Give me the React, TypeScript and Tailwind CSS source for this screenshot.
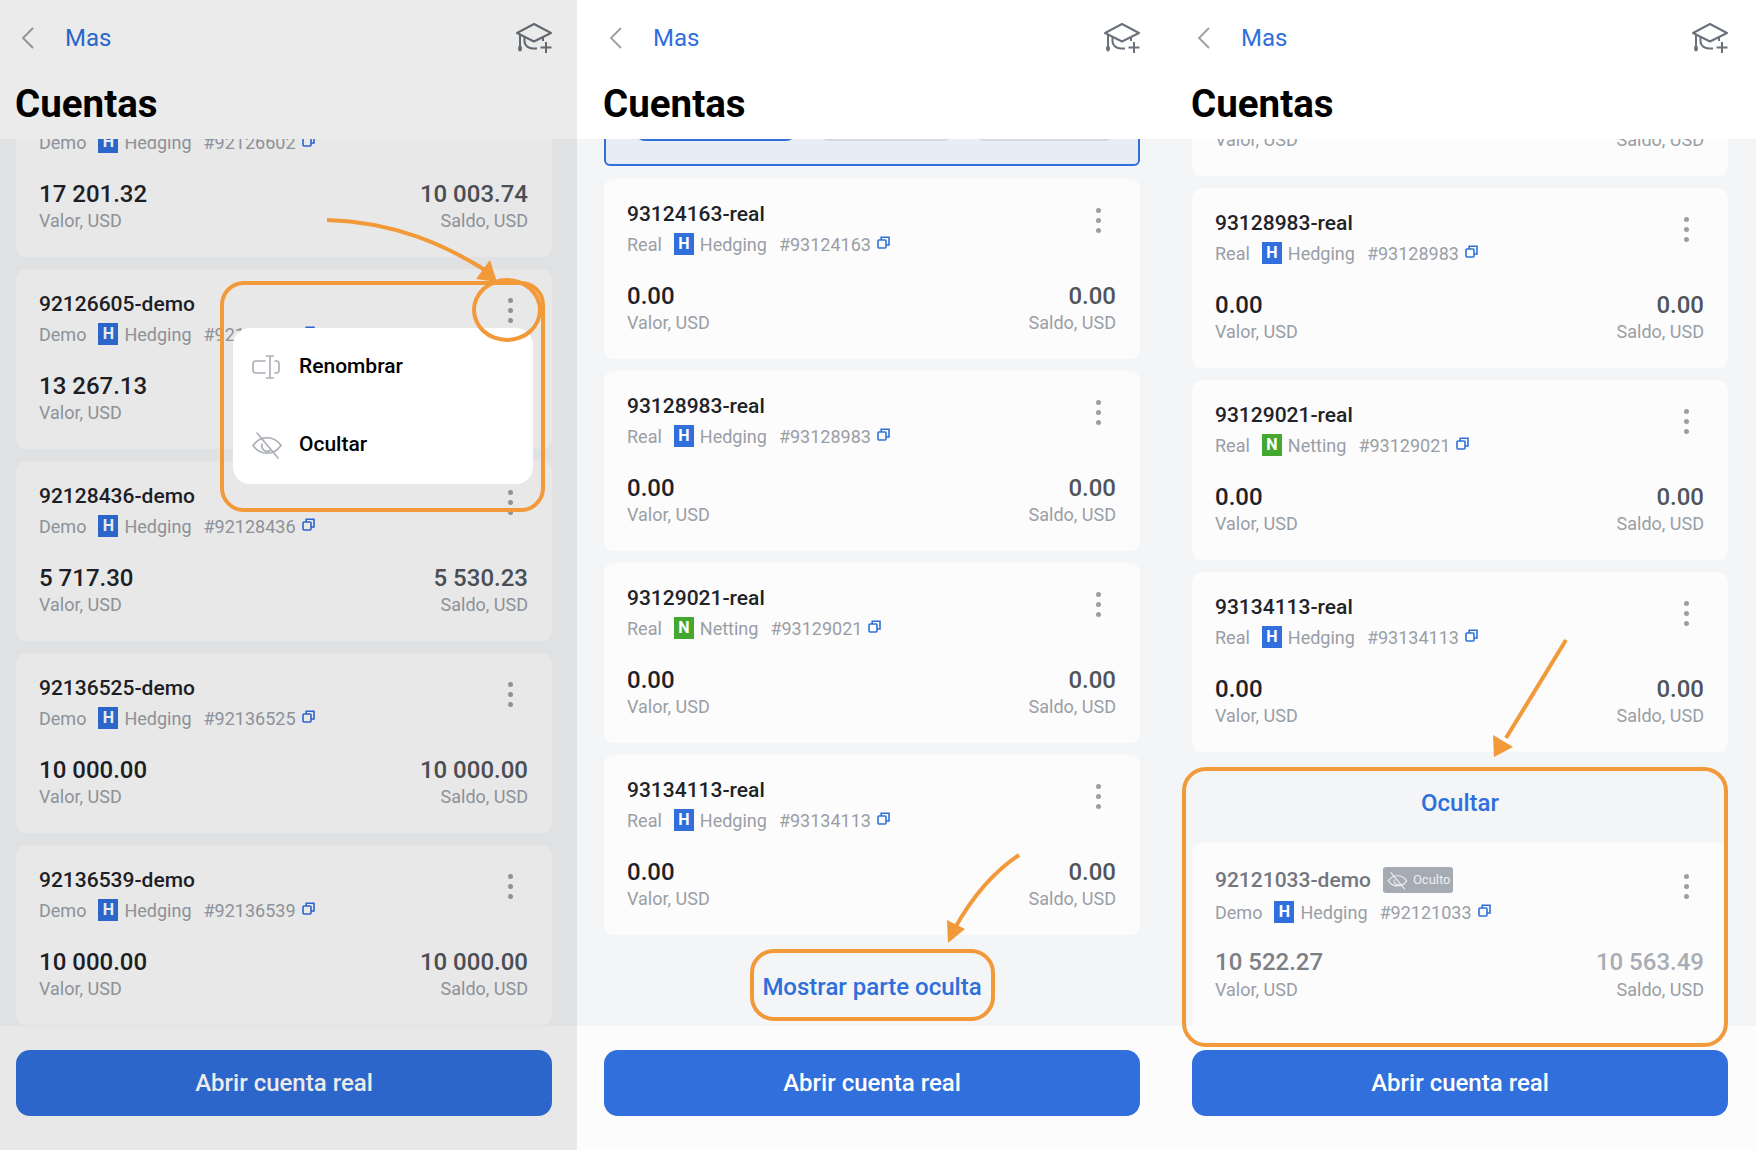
import React from "react";

const font = { fontFamily: '"Roboto", "Liberation Sans", sans-serif' };

function Copy() {
  return (
    <svg width="13" height="13" viewBox="0 0 13 13" fill="none" stroke="#2f6fdc" strokeWidth="1.6" className="ml-[6px] -mt-[3px]">
      <rect x="1" y="4" width="8" height="8" rx="1" />
      <path d="M4.2 4V1.2H12V9H9" />
    </svg>
  );
}

function Dots() {
  return (
    <div className="flex flex-col gap-[5px] mt-[7px] mr-[15px]">
      <span className="w-[5px] h-[5px] rounded-full bg-[#9a9ea6]" />
      <span className="w-[5px] h-[5px] rounded-full bg-[#9a9ea6]" />
      <span className="w-[5px] h-[5px] rounded-full bg-[#9a9ea6]" />
    </div>
  );
}

function EyeOff({ size = 32, color = "#a9adb5", width = 1.6 }: { size?: number; color?: string; width?: number }) {
  return (
    <svg width={size} height={size} viewBox="0 0 32 32" fill="none" stroke={color} strokeWidth={width} strokeLinecap="round">
      <path d="M2 16.5C6 11 11 8.8 16 8.8S26 11 30 16.5C26 22 21 24.2 16 24.2S6 22 2 16.5Z" />
      <path d="M11 15a5.5 5.5 0 0 0 8 6.5" />
      <path d="M6 4L27 29" />
    </svg>
  );
}

function Rename() {
  return (
    <svg width="30" height="26" viewBox="0 0 30 26" fill="none" stroke="#a9adb5" strokeWidth="1.6" strokeLinecap="round" strokeLinejoin="round">
      <path d="M14 7H5a3 3 0 0 0-3 3v6a3 3 0 0 0 3 3h9" />
      <path d="M24 7h1a3 3 0 0 1 3 3v6a3 3 0 0 1-3 3h-1" />
      <path d="M19 3v20M15.5 2h7M15.5 24h7" />
    </svg>
  );
}

function GradCap() {
  return (
    <svg width="38" height="32" viewBox="0 0 38 32" fill="none" stroke="#6b717a" strokeWidth="2">
      <path d="M2 11L19 2L36 11L19 19.5Z" strokeLinejoin="round" />
      <path d="M5 12V26" />
      <rect x="3.6" y="24" width="2.8" height="5" rx="1.4" fill="#6b717a" strokeWidth="1" />
      <path d="M9.5 15V19C9.5 24 14 26.5 18 26.5H22" />
      <path d="M28 15V19" />
      <path d="M31 20V31M25.5 25.5H36.5" />
    </svg>
  );
}

type CardProps = {
  name: string;
  kind: string;
  mode?: "H" | "N";
  id: string;
  value: string;
  saldo: string;
  hidden?: boolean;
};

function Card({ name, kind, mode = "H", id, value, saldo, hidden }: CardProps) {
  return (
    <div className={`bg-[#fcfcfc] rounded-[10px] pl-[23px] pr-[24px] ${hidden ? "pt-[24px] h-[190px]" : "pt-[22px] h-[180px]"}`}>
      <div className="flex justify-between">
        <div>
          <div className="flex items-center h-[26px]">
            <span className={`text-[21px] font-medium leading-[26px] ${hidden ? "text-[#73777d]" : "text-[#1f2329]"}`}>{name}</span>
            {hidden && (
              <span className="ml-[12px] w-[70px] h-[26px] rounded-[3px] bg-[#a6aab3] flex items-center pl-[4px] gap-[5px] text-[13px] text-[#eceef1]">
                <EyeOff size={21} color="#eceef1" width={1.7} />
                Oculto
              </span>
            )}
          </div>
          <div className={`flex items-center h-[24px] text-[18px] text-[#9a9ea6] ${hidden ? "mt-[7px]" : "mt-[5px]"}`}>
            <span>{kind}</span>
            <span className={`ml-[12px] mr-[6px] w-[20px] h-[22px] flex items-center justify-center text-white text-[16px] font-bold ${mode === "H" ? "bg-[#316fdc]" : "bg-[#43a82f]"}`}>{mode}</span>
            <span>{mode === "H" ? "Hedging" : "Netting"}</span>
            <span className="ml-[12px]">#{id}</span>
            <Copy />
          </div>
        </div>
        <Dots />
      </div>
      <div className={`flex justify-between ${hidden ? "mt-[24px]" : "mt-[26px]"}`}>
        <div>
          <div className={`text-[24px] font-medium leading-[28px] ${hidden ? "text-[#7c8085]" : "text-[#1f2329]"}`}>{value}</div>
          <div className={`text-[18px] leading-[24px] text-[#9a9ea6] ${hidden ? "mt-[2px]" : "mt-[1px]"}`}>Valor, USD</div>
        </div>
        <div className="text-right">
          <div className={`text-[24px] font-medium leading-[28px] ${hidden ? "text-[#a9adb3]" : "text-[#50555c]"}`}>{saldo}</div>
          <div className={`text-[18px] leading-[24px] text-[#9a9ea6] ${hidden ? "mt-[2px]" : "mt-[1px]"}`}>Saldo, USD</div>
        </div>
      </div>
    </div>
  );
}

function Header({ pad }: { pad: string }) {
  return (
    <div className={`h-[139px] bg-white shrink-0 relative z-10 ${pad}`}>
      <div className="flex items-center h-[75px]">
        <svg width="14" height="22" viewBox="0 0 14 22" fill="none" stroke="#9a9ea6" strokeWidth="1.8" className="ml-[5px]">
          <path d="M12 1L2 11L12 21" />
        </svg>
        <span className="ml-[30px] text-[24px] text-[#2f6fdc]">Mas</span>
        <div className="ml-auto -mr-[1px]">
          <GradCap />
        </div>
      </div>
      <div className="text-[38.5px] font-bold leading-[46px] text-black mt-[6px] -ml-[1px]">Cuentas</div>
    </div>
  );
}

function Footer({ pad }: { pad: string }) {
  return (
    <div className={`h-[124px] shrink-0 bg-[#fcfcfc] pt-[24px] relative z-10 ${pad}`}>
      <div className="h-[66px] rounded-[14px] bg-[#316fdc] text-white text-[24px] font-medium flex items-center justify-center">
        Abrir cuenta real
      </div>
    </div>
  );
}

function Panel1() {
  return (
    <div className="relative w-[577px] shrink-0 h-[1150px] flex flex-col bg-[#f3f5f7] overflow-hidden">
      <Header pad="pl-[16px] pr-[25px]" />
      <div className="flex-1 overflow-hidden pl-[16px] pr-[25px]">
        <div className="flex flex-col gap-[12px] -mt-[62px]">
          <Card name="92126602-demo" kind="Demo" id="92126602" value="17 201.32" saldo="10 003.74" />
          <Card name="92126605-demo" kind="Demo" id="92126605" value="13 267.13" saldo="" />
          <Card name="92128436-demo" kind="Demo" id="92128436" value="5 717.30" saldo="5 530.23" />
          <Card name="92136525-demo" kind="Demo" id="92136525" value="10 000.00" saldo="10 000.00" />
          <Card name="92136539-demo" kind="Demo" id="92136539" value="10 000.00" saldo="10 000.00" />
        </div>
      </div>
      <Footer pad="pl-[16px] pr-[25px]" />
      <div className="absolute inset-0 z-20 bg-black/[0.08]" />
      <div className="absolute z-30 left-[233px] top-[328px] w-[300px] h-[156px] bg-white rounded-[17px] text-[21px] font-medium text-black">
        <div className="flex items-center h-[78px] pl-[18px] gap-[18px]">
          <Rename />
          <span>Renombrar</span>
        </div>
        <div className="flex items-center h-[78px] pl-[18px] gap-[16px]">
          <EyeOff />
          <span>Ocultar</span>
        </div>
      </div>
    </div>
  );
}

function Panel2() {
  return (
    <div className="w-[589px] shrink-0 h-[1150px] flex flex-col bg-[#f3f5f7] overflow-hidden">
      <Header pad="pl-[27px] pr-[26px]" />
      <div className="flex-1 overflow-hidden pl-[27px] pr-[26px]">
        <div className="h-[67px] -mt-[40px] rounded-[6px] border-[2px] border-[#316fdc] bg-[#e8edf5] flex items-end pb-[23px] pl-[29px] pr-[23px] justify-between">
          <div className="w-[161px] h-[24px] rounded-[10px] border-[2px] border-[#316fdc]" />
          <div className="w-[134px] h-[24px] rounded-[10px] border-[2px] border-[#d5d8dd]" />
          <div className="w-[140px] h-[24px] rounded-[10px] border-[2px] border-[#d5d8dd]" />
        </div>
        <div className="flex flex-col gap-[12px] mt-[13px]">
          <Card name="93124163-real" kind="Real" id="93124163" value="0.00" saldo="0.00" />
          <Card name="93128983-real" kind="Real" id="93128983" value="0.00" saldo="0.00" />
          <Card name="93129021-real" kind="Real" mode="N" id="93129021" value="0.00" saldo="0.00" />
          <Card name="93134113-real" kind="Real" id="93134113" value="0.00" saldo="0.00" />
        </div>
        <div className="flex justify-center mt-[37px] text-[24px] font-medium leading-[30px] text-[#2f6fdc]">Mostrar parte oculta</div>
      </div>
      <Footer pad="pl-[27px] pr-[26px]" />
    </div>
  );
}

function Panel3() {
  return (
    <div className="flex-1 h-[1150px] flex flex-col bg-[#f3f5f7] overflow-hidden">
      <Header pad="pl-[26px] pr-[28px]" />
      <div className="flex-1 overflow-hidden pl-[26px] pr-[28px]">
        <div className="flex flex-col gap-[12px] -mt-[143px]">
          <Card name="93124163-real" kind="Real" id="93124163" value="0.00" saldo="0.00" />
          <Card name="93128983-real" kind="Real" id="93128983" value="0.00" saldo="0.00" />
          <Card name="93129021-real" kind="Real" mode="N" id="93129021" value="0.00" saldo="0.00" />
          <Card name="93134113-real" kind="Real" id="93134113" value="0.00" saldo="0.00" />
        </div>
        <div className="h-[91px] flex items-center justify-center pt-[11px] text-[24px] font-medium text-[#2f6fdc]">Ocultar</div>
        <Card hidden name="92121033-demo" kind="Demo" id="92121033" value="10 522.27" saldo="10 563.49" />
      </div>
      <Footer pad="pl-[26px] pr-[28px]" />
    </div>
  );
}

function Annotations() {
  const c = "#f2993a";
  return (
    <>
      <div className="absolute z-40 left-[220px] top-[281px] w-[325px] h-[231px] rounded-[24px] border-[4px] border-[#f2993a]" />
      <div className="absolute z-40 left-[472px] top-[278px] w-[70px] h-[64px] rounded-[50%] border-[4px] border-[#f2993a]" />
      <div className="absolute z-40 left-[750px] top-[949px] w-[245px] h-[72px] rounded-[24px] border-[4px] border-[#f2993a]" />
      <div className="absolute z-40 left-[1182px] top-[767px] w-[546px] h-[280px] rounded-[24px] border-[4px] border-[#f2993a]" />
      <svg className="absolute z-40 left-0 top-0" width="1756" height="1150" fill="none">
        <path d="M327 220C395 222 445 245 485 270" stroke={c} strokeWidth="4" />
        <path d="M497 282L476 279L490 260Z" fill={c} />
        <path d="M1019 855C985 878 965 910 955 928" stroke={c} strokeWidth="4" />
        <path d="M948 943L947 920L965 929Z" fill={c} />
        <path d="M1566 640L1506 738" stroke={c} strokeWidth="4" />
        <path d="M1494 757L1493 735L1513 747Z" fill={c} />
      </svg>
    </>
  );
}

export default function App() {
  return (
    <div className="relative w-[1756px] h-[1150px] flex overflow-hidden bg-white" style={font}>
      <Panel1 />
      <Panel2 />
      <Panel3 />
      <Annotations />
    </div>
  );
}
